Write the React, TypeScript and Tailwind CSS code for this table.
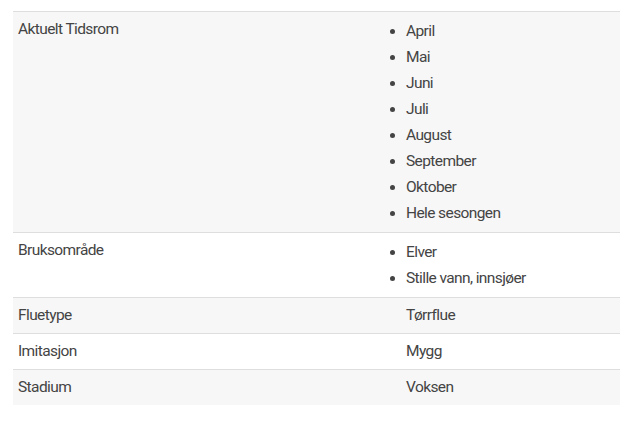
type Row = { label: string; values: string[]; list?: boolean }

const rows: Row[] = [
  {
    label: "Aktuelt Tidsrom",
    list: true,
    values: ["April", "Mai", "Juni", "Juli", "August", "September", "Oktober", "Hele sesongen"],
  },
  { label: "Bruksområde", list: true, values: ["Elver", "Stille vann, innsjøer"] },
  { label: "Fluetype", values: ["Tørrflue"] },
  { label: "Imitasjon", values: ["Mygg"] },
  { label: "Stadium", values: ["Voksen"] },
]

export default function App() {
  return (
    <div className="min-h-screen bg-white pt-[11px] pl-[13px] font-['Roboto',sans-serif] text-[15.5px] tracking-[-0.6px] text-[#444]">
      <table className="w-[607px] border-collapse">
        <tbody>
          {rows.map((row, i) => (
            <tr
              key={row.label}
              className={`border-t border-[#dedede] align-top ${i % 2 === 0 ? "bg-[#f7f7f7]" : "bg-white"}`}
            >
              <td className="w-[388px] px-[5px] py-[6px] leading-[23px]">{row.label}</td>
              <td className="px-[5px] py-[6px] leading-[23px]">
                {row.list ? (
                  <ul className="list-disc pl-0 marker:text-[#444]">
                    {row.values.map((v) => (
                      <li key={v} className="leading-[26px]">
                        {v}
                      </li>
                    ))}
                  </ul>
                ) : (
                  row.values[0]
                )}
              </td>
            </tr>
          ))}
        </tbody>
      </table>
    </div>
  )
}
